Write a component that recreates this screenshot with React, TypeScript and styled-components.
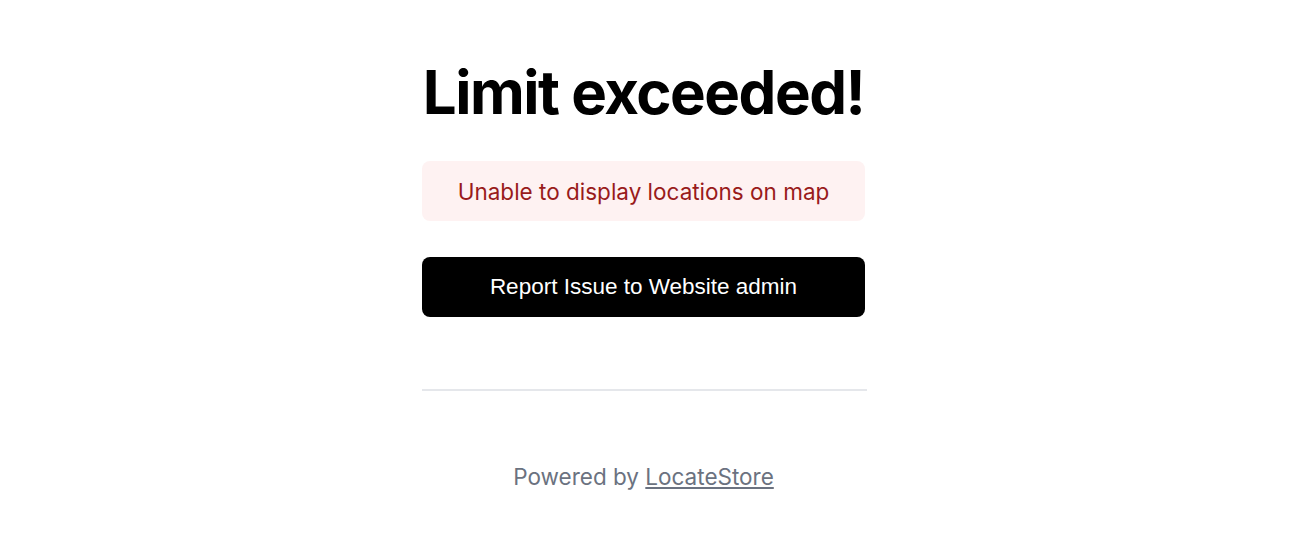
import React from "react";
import styled, { createGlobalStyle } from "styled-components";

const Global = createGlobalStyle`
  html, body { margin: 0; padding: 0; background: #ffffff; }
  body { font-family: Inter, "Noto Sans", sans-serif; }
`;

const Page = styled.main`
  display: flex;
  justify-content: center;
  padding: 56px 7px 0 0;
`;

const Column = styled.div`
  width: 443px;
  display: flex;
  flex-direction: column;
  align-items: stretch;
`;

const Title = styled.h1`
  margin: 0;
  font-family: Inter, sans-serif;
  font-weight: 700;
  font-size: 60px;
  line-height: 72px;
  letter-spacing: -0.025em;
  color: #000;
  text-align: center;
  white-space: nowrap;
`;

const Alert = styled.div`
  margin-top: 33px;
  height: 60px;
  border-radius: 8px;
  background: #fef2f2;
  color: #991b1b;
  display: flex;
  align-items: center;
  justify-content: center;
  font-family: Inter, sans-serif;
  font-size: 22.5px;
`;

const Button = styled.button`
  margin-top: 36px;
  height: 60px;
  border: none;
  border-radius: 8px;
  background: #000;
  color: #fff;
  font-family: "Liberation Sans", Arial, sans-serif;
  font-size: 22.5px;
  cursor: pointer;
`;

const Divider = styled.hr`
  margin: 72px 0 0 0;
  width: 445px;
  border: none;
  border-top: 2px solid #e5e7eb;
  height: 0;
`;

const Footer = styled.p`
  margin: 72px 0 0 0;
  text-align: center;
  font-family: Inter, sans-serif;
  font-size: 22.5px;
  color: #6b7280;
`;

const Link = styled.a`
  color: inherit;
  text-decoration: underline;
  text-decoration-thickness: 2px;
  text-underline-offset: 2px;
`;

export default function App() {
  return (
    <>
      <Global />
      <Page>
        <Column>
          <Title>Limit exceeded!</Title>
          <Alert>Unable to display locations on map</Alert>
          <Button>Report Issue to Website admin</Button>
          <Divider />
          <Footer>
            Powered by <Link href="#">LocateStore</Link>
          </Footer>
        </Column>
      </Page>
    </>
  );
}
